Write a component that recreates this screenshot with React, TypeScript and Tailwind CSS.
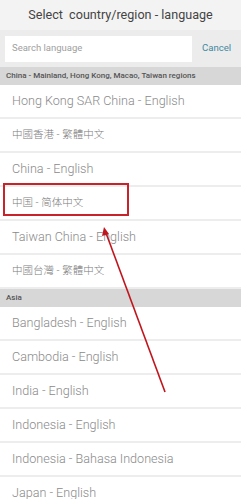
const sections = [
  {
    title: 'China - Mainland, Hong Kong, Macao, Taiwan regions',
    items: [
      'Hong Kong SAR China - English',
      '中國香港 - 繁體中文',
      'China - English',
      '中国 - 简体中文',
      'Taiwan China - English',
      '中國台灣 - 繁體中文',
    ],
  },
  {
    title: 'Asia',
    items: [
      'Bangladesh - English',
      'Cambodia - English',
      'India - English',
      'Indonesia - English',
      'Indonesia - Bahasa Indonesia',
      'Japan - English',
    ],
  },
];

const font = "font-['Roboto','Noto_Sans_CJK_SC',sans-serif]";

// CJK labels render noticeably smaller in the app
const isCjk = (s: string) => /[\u4e00-\u9fff]/.test(s);

const Row = ({ label, marked }: { label: string; marked?: boolean }) => (
  <div className="relative h-[34px] flex items-center px-3 bg-white border-b-2 border-[#ededed]">
    <span
      className={
        isCjk(label)
          ? 'text-[10.5px] font-light text-[#7c7c7c]'
          : 'text-[12.6px] font-light text-[#8a8a8a]'
      }
    >
      {label}
    </span>
    {marked && (
      <div className="absolute left-[3px] top-[-4px] w-[126px] h-[33px] border-2 border-[#c8232a]" />
    )}
  </div>
);

export default function App() {
  return (
    <div className={`relative w-[241px] h-[499px] overflow-hidden bg-white ${font}`}>
      <div className="h-[30px] flex items-center justify-center bg-[#f3f3f3]">
        <h1 className="text-[12.6px] text-[#444]">Select&nbsp; country/region - language</h1>
      </div>
      <div className="h-[37px] flex items-center pl-[5px] bg-[#ececec]">
        <div className="w-[187px] h-[26px] flex items-center px-[7px] bg-white">
          <span className="text-[9.5px] text-[#a0a0a0]">Search language</span>
        </div>
        <span className="ml-[10px] text-[9.6px] text-[#3e8aa0]">Cancel</span>
      </div>
      {sections.map((section) => (
        <div key={section.title}>
          <div className="h-[18px] flex items-center px-[6px] bg-[#d7d7d7]">
            <span className="text-[8px] font-medium text-[#555]">{section.title}</span>
          </div>
          {section.items.map((item) => (
            <Row key={item} label={item} marked={item === '中国 - 简体中文'} />
          ))}
        </div>
      ))}
      <svg className="absolute left-0 top-0 pointer-events-none" width="241" height="499">
        <line x1="165" y1="392" x2="106" y2="233" stroke="#c0151c" strokeWidth="1.6" />
        <polygon points="104,227 102,236 109,234" fill="#c0151c" />
      </svg>
    </div>
  );
}
